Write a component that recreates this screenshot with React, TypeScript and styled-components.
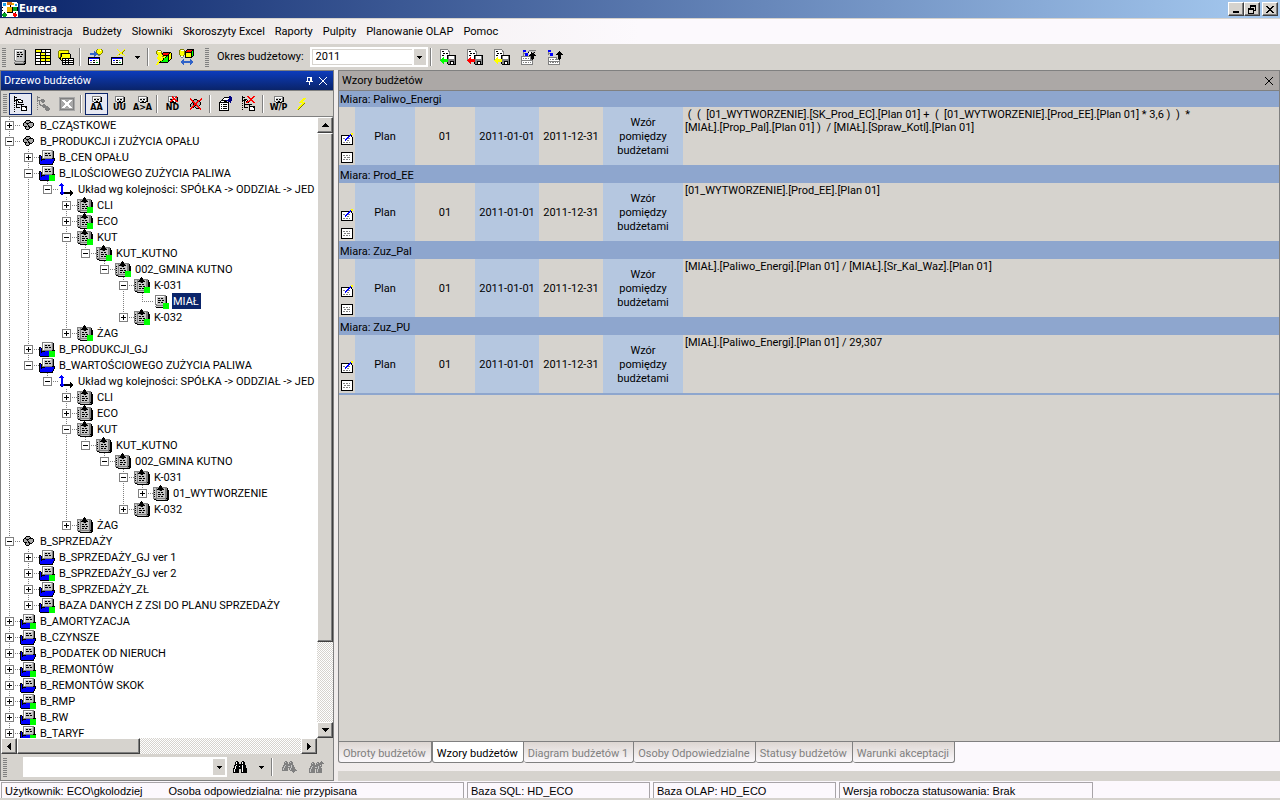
import React from "react";
import styled, { createGlobalStyle, css } from "styled-components";

const ui = `Roboto, "Liberation Sans", sans-serif`;
const face = "#d6d3ce";

const Global = createGlobalStyle`
  * { box-sizing: border-box; }
  html, body { margin: 0; height: 100%; }
  body { font: 11px/14px ${ui}; color: #000; background: ${face}; overflow: hidden; }
  button, input, select { font: inherit; color: inherit; margin: 0; padding: 0; border: 0; background: none; border-radius: 0; }
  button:focus-visible { outline: 1px dotted #000; }
`;

/* ---------- pixel icons ---------- */

const palette: Record<string, string> = {
  k: "#000000", w: "#ffffff", g: "#808080", l: "#c6c6c6", y: "#ffff00", o: "#808000",
  b: "#0000ff", n: "#000080", G: "#00ff00", e: "#00a020", r: "#ff0000", s: "#2f62c8",
  a: "#f0b000", c: "#20a0e8", t: "#e07010", d: "#a8a8a8",
};

function Pixels({ rows }: { rows: string[] }) {
  const width = Math.max(...rows.map((r) => r.length));
  const rects: React.ReactNode[] = [];
  rows.forEach((row, y) => {
    let x = 0;
    while (x < row.length) {
      let end = x + 1;
      while (end < row.length && row[end] === row[x]) end++;
      if (palette[row[x]]) {
        rects.push(<rect key={`${x}-${y}`} x={x} y={y} width={end - x} height={1} fill={palette[row[x]]} />);
      }
      x = end;
    }
  });
  return (
    <svg width={width} height={rows.length} viewBox={`0 0 ${width} ${rows.length}`} shapeRendering="crispEdges" aria-hidden="true">
      {rects}
    </svg>
  );
}

const icons: Record<string, string[]> = {
  logo: [
    "wwwwwtttttwwwww.",
    "wcccwtttttaawwww",
    "wcccwtttttaawccw",
    "wcccwwwwkwwwwccw",
    "wwwwwwwwkwwwwwww",
    "kwwwwaaaaakeeeek",
    "wwwwwaaaaakeeeek",
    "wwwwwaaaaakeeeek",
    "kwwwwaaaaakeeeek",
    "wwwwwaaaaakwwwww",
    "wwkwwkkkkkkwwkww",
    "weeewwwwwwwrrrww",
    "eeeeewwwwwwrrrrw",
    "eeeeewwwwwwrrrrw",
    "weeewwwwwwwwrrww",
  ],
  doc: [
    "ggggggggggg.",
    "gwwwwwwwwlgk",
    "gwllllllllgk",
    "gwlkklkkllgk",
    "gwllllllllgk",
    "gwlkkklkklgk",
    "gwllllllllgk",
    "gwlkklkkllgk",
    "gwllllllllgk",
    "gwllllllllgk",
    "gwllllllllgk",
    "ggllllllllgk",
    ".gggggggggkk",
    "gllllllllggk",
    "ggggggggggkk",
    ".kkkkkkkkkk.",
  ],
  grid: [
    "kkkkkkkkkkkkkkkk",
    "kyyyyykwwwkwwwwk",
    "kyyyyykwwwkwwwwk",
    "kkkkkkkkkkkkkkkk",
    "kwwwwkyyyykwwwwk",
    "kwwwwkyyyykwwwwk",
    "kkkkkkkkkkkkkkkk",
    "kwwwwkyyyykyyyyk",
    "kwwwwkyyyykyyyyk",
    "kkkkkkkkkkkkkkkk",
    "kwwwwkyyyykyyyyk",
    "kwwwwkyyyykyyyyk",
    "kkkkkkkkkkkkkkkk",
    "kwwwwkwwwwkwwwwk",
    "kwwwwkwwwwkwwwwk",
    "kkkkkkkkkkkkkkkk",
  ],
  stack: [
    ".oooooooooo.....",
    "oyyyyyyyyyo.....",
    "oyyyyyyyyyo.....",
    "oyokkkkkkkkk....",
    "oyokyyyyyyyyk...",
    "oyokyyyyyyyyk...",
    "oyokyyyyyyyyk...",
    "ookyyyyyyyyyk...",
    ".kkykkkkkkkkkkkk",
    "..kykwwkwwkwwwwk",
    "...kkkkkkkkkkkkk",
    "....kwwkwwkwwwwk",
    "....kkkkkkkkkkkk",
    "....kwwkwwkwwwwk",
    "....kkkkkkkkkkkk",
  ],
  importForm: [
    ".........oyyyo..",
    "........oyyywyo.",
    "......s.oyyyyyo.",
    "......ssoyyyyyo.",
    "..sssssssoyyyo..",
    "..ssssssssooo...",
    "......ss..gg....",
    "......s.........",
    "kkkkkkkkkkkk....",
    "kbbbbbbbbbbk....",
    "kwwwwwwwwwwk....",
    "kwbbwkkwgwwk....",
    "kwwwwwwwwwwk....",
    "kwggwkkweewk....",
    "kwwwwwwwwwwk....",
    "kkkkkkkkkkkk....",
  ],
  deleteForm: [
    "......y......y..",
    ".......y....yo..",
    "........y..yo...",
    ".........yyo....",
    "........yyyo....",
    ".......yo..yy...",
    "......y......y..",
    "................",
    "kkkkkkkkkkkk....",
    "kbbbbbbbbbbk....",
    "kwwwwwwwwwwk....",
    "kwbbwkkwgwwk....",
    "kwwwwwwwwwwk....",
    "kwggwkkweewk....",
    "kwwwwwwwwwwk....",
    "kkkkkkkkkkkk....",
  ],
  cubeFlash: [
    ".oooo...........",
    "oywwwo..........",
    "oyyyyo.kkkkkkkk.",
    "oyyyyokrrrrrrkyk",
    ".oyyyykrrrrrkyyk",
    "..yyyyykkkkkkyyk",
    "..yyyyooyykGkyyk",
    ".yyyy.yyykGGkyyk",
    ".yyyyyykGGGGkyyk",
    "..yyyyykGGGGkyk.",
    "...yyykGGGGGkk..",
    "..yykGGGGGGGk...",
    ".yykkkkkkkkk....",
    ".yy.............",
    "yy..............",
  ],
  cubeSwap: [
    ".oooo...kkkkkkk.",
    "oywwwo.krrrrrkk.",
    "oyyyyokrrrrrkGk.",
    "oyyyyokkkkkkkGk.",
    "oyyyyokyyyyykGk.",
    "oyyyyokyyyyykGk.",
    ".oyyo.kyyyyykGk.",
    ".gwwg.kyyyyykk..",
    "..gg..kkkkkkk...",
    "................",
    "....s......s....",
    "...ss......ss...",
    "..ssssssssssss..",
    "..ssssssssssss..",
    "...ss......ss...",
    "....s......s....",
  ],
  upload: [
    "..bbb...ggggggg.",
    "..bbb..gllllll..",
    "..g....kwwk.gk..",
    "..ggbbb.wwkkk...",
    "..g.bbb..kkkkk..",
    "..g.bbb.kkkkkkk.",
    "ggggggggggkkk...",
    "gwwwwwwwwgkkk...",
    "gwgwggwgwgkkk...",
    "gwwwwwwwwggk....",
    "gggggggggggg....",
    "gwwwwwwwwwwg....",
    "gwgwggwgwgwg....",
    "gwwwwwwwwwwg....",
    "gggggggggggg....",
  ],
  uploadPlain: [
    "bbb.............",
    "bbb........k....",
    "g.........kkk...",
    "ggbbb....kkkkk..",
    "g.bbb...kkkkkkk.",
    "..bbb.....kkk...",
    "..........kkk...",
    "ggggggggg.kkk...",
    "gwwwwwwwg.kkk...",
    "gwgwggwggggk....",
    "gwwwwwwwwwwg....",
    "gggggggggggg....",
    "gwgwggwgwgwg....",
    "gwwwwwwwwwwg....",
    "gggggggggggg....",
  ],
  treeView: [
    "k.............",
    "kkk...........",
    "k.............",
    "k.kkkkk.......",
    "kkkkwwwkk.....",
    "k.k.kwwwk.....",
    "..k.kkkkk.....",
    "k.k...........",
    "..kkkkkkkk....",
    "k.k....k......",
    "..k....kkkkkk.",
    "k.kkkk.kwwwkk.",
    ".......kwwwwk.",
    "k......kwwwwk.",
    ".......kkkkkk.",
    "k.............",
  ],
  treeNodes: [
    "g.............",
    "ggg...........",
    "g.............",
    "g...ggg.......",
    "gggggggg......",
    "g.g.gggg......",
    "..g..gg.......",
    "g.g...........",
    "..gg..gg......",
    "g..gggggg.....",
    ".....gggggg...",
    "g.....gggggg..",
    "........ggggg.",
    "g.......ggggg.",
    ".........ggg..",
  ],
  excel: [
    "dddddddddddddddd",
    "dggggggggggggggd",
    "dgddddddddddddgd",
    "dgdwwwddddwwwdgd",
    "dgddwwwddwwwddgd",
    "dgdddwwwwwwdddgd",
    "dgddddwwwwddddgd",
    "dgddddwwwwddddgd",
    "dgdddwwwwwwdddgd",
    "dgddwwwddwwwddgd",
    "dgdwwwddddwwwdgd",
    "dgddddddddddddgd",
    "dggggggggggggggd",
    "dddddddddddddddd",
  ],
  miniDoc: [
    ".ggggggggg..",
    ".gwwwwwwwgk.",
    ".gwllllllgk.",
    ".gwkkwkkwgk.",
    ".gwlllllwgk.",
    ".ggwlkkwgkk.",
    "...kkkkkk...",
  ],
  miniDocX: [
    ".ggggrgggr..",
    ".gwwwrrwrrk.",
    ".gwlllrrlgk.",
    ".gwkkrrrrgk.",
    ".gwlrrwwrrk.",
    ".ggrrkkwgrr.",
    "...kkkkkk...",
  ],
  ballsX: [
    "r..........r",
    "rr..kkk...rr",
    ".rrkdddkrrr.",
    "..rrdddrrk..",
    "..krrdrrddk.",
    ".kdkrrrdddk.",
    "kddkrrrdddk.",
    "kddrrkrrdk..",
    "kdrrkddrr...",
    ".rrk.kddrr..",
    "rr....kkkrr.",
    "r.........r.",
  ],
  props: [
    "..........nn.",
    ".....kkkkknnn",
    "....kwwwwwnnn",
    "...kwwwwwnnnn",
    "..kkkkknnnnnn",
    ".kwwwkkk.nnn.",
    "kkkkkkkkkk.n.",
    "kwwwwwwwwk...",
    "kwkwkkkkwk...",
    "kwwwwwwwwk...",
    "kwkwkkkkwk...",
    "kwwwwwwwwk...",
    "kwkwkkkkwk...",
    "kwwwwwwwwk...",
    "kkkkkkkkkk...",
  ],
  treeX: [
    "k....rr....rr.",
    "kkk...rr..rr..",
    "k......rrrr...",
    "k.kkk...rr....",
    "kkkkwk.rrrr...",
    "k.k.krrr..rr..",
    "..k.rrk....rr.",
    "k.k...........",
    "..kkkkkkkk....",
    "k.k....k......",
    "..k....kkkkkk.",
    "k.kkkk.kwwwkk.",
    ".......kwwwwk.",
    "k......kwwwwk.",
    ".......kkkkkk.",
  ],
  flash: [
    "......yyy",
    ".....yyy.",
    "....yyy..",
    "...yyy...",
    "..yyyyyy.",
    ".....yyo.",
    "....yyo..",
    "...yyo...",
    "..yyo....",
    ".yyo.....",
    ".yo......",
    "yo.......",
  ],
  find: [
    "...kk....kk....",
    "..kwkk..kwkk...",
    "..kwkk..kwkk...",
    "..kkkkkkkkkk...",
    ".kkwkkkkkwkkk..",
    ".kwkkkwkkwkkk..",
    ".kwkkkkkkwkkk..",
    "kkwkkkkkkwkkkk.",
    "kwkkkk..kwkkkk.",
    "kwkkkk..kwkkkk.",
    "kwkkkk..kwkkkk.",
    "kkkkkk..kkkkkk.",
  ],
  findNext: [
    "...gg...gg.....",
    "..glgg.glgg....",
    "..gggg.gggg....",
    "..ggggggggg....",
    ".gglggggglgg...",
    ".glgggllglgg...",
    "gglgggggglggg..",
    "glgggg.glgggg..",
    "glgggg.glggggg.",
    "gggggg..ggggggg",
    "..........ggg..",
    "...........g...",
  ],
  findPrev: [
    "............g..",
    "...gg...gg.ggg.",
    "..glgg.glgggggg",
    "..gggg.gggggg..",
    "..ggggggggg.g..",
    ".gglggggglggg..",
    ".glgggllglgg...",
    "gglgggggglggg..",
    "glgggg.glgggg..",
    "glgggg.glgggg..",
    "glgggg.glgggg..",
    "gggggg.gggggg..",
  ],
  balls: [
    "....kkkk.....",
    "...kddddk....",
    "..kkdddkkkk..",
    ".kddkkkddddk.",
    ".kdddkdddddk.",
    ".kddddkddddk.",
    "..kkkdkkddk..",
    "...kdddkkk...",
    "...kdddk.....",
    "....kkk......",
  ],
  folder: [
    "...ggggggggggg..",
    "...gwwwwwwwwlgk.",
    "...gwllllllllgk.",
    "...gwlkklkkllgk.",
    "...gwllllllllgk.",
    "kk.gwlkkklkklgk.",
    "kbkgwllllllllgk.",
    "kbkgwllllllllgk.",
    "kbkggggggggggkkk",
    "kbkkkkbbbbbbbbbk",
    "kbkbbbbbbbbbbbbk",
    "kbbbbbbbbbbbbbk.",
    "kbbbbbbbbbbbbbk.",
    "kbbbbbbbbbbbbk..",
    ".kkkkkkkkkkkkk..",
  ],
  axes: [
    "...b............",
    "..bbb...........",
    ".bbbbb..........",
    "...bb...........",
    "...bb...........",
    "...bb...........",
    "...bb...........",
    "...bb.......k...",
    "...bb.......kk..",
    "..nbbbkkkkkkkkk.",
    "..nbbbkkkkkkkkk.",
    "...nn.......kk..",
    "............k...",
  ],
  docs: [
    ".......k........",
    "......kkk.......",
    "ggggggkkkggggg..",
    "gllgdkkkkkdlggk.",
    "gllgkkkkkkklggk.",
    "gklgllgkklllggkk",
    "gllgllllllllggkk",
    "gklglkklkkllggkk",
    "gllgllllllllggkk",
    "gklglkkklkklggkk",
    "gllgllllllllggkk",
    "gklglkklkkllggkk",
    "gllgllllllllggkk",
    "gggggggggggggkkk",
    ".kkgllllllllggkk",
    "...kkkkkkkkkkkk.",
  ],
  sheet: [
    ".ggggggggggg..",
    ".gwwwwwwwwlgk.",
    ".gwllllllllgk.",
    ".gwlkklkkllgk.",
    ".gwllllllllgk.",
    ".gwlkkklkklgk.",
    ".gwllllllllgk.",
    ".gwlkklkkllgk.",
    ".gwllllllllgk.",
    ".ggllllllllgk.",
    "..gggggggggkk.",
    ".glllllllllgk.",
    "..kkkkkkkkkkk.",
  ],
  edit: [
    "..........yy",
    ".........byy",
    "kkkkkkkkbbk.",
    "kwwwwwwbbwk.",
    "kwwwwwbbwwwk",
    "kwggwbbggwwk",
    "kwwwbbwwwwwk",
    "kwwwbwggwwwk",
    "kwwwwwwwwwwk",
    "kwggwggwgwwk",
    "kwwwwwwwwwwk",
    "kkkkkkkkkkkk",
  ],
  list: [
    "kkkkkkkkkkkk",
    "kwwwwwwwwwwk",
    "kwwwwwwwwwwk",
    "kwggwggwgwwk",
    "kwwwwwwwwwwk",
    "kwwggwgggwwk",
    "kwwwwwwwwwwk",
    "kwggwggwgwwk",
    "kwwwwwwwwwwk",
    "kwwwwwwwwwwk",
    "kkkkkkkkkkkk",
  ],
  pin: [".wwwww.", ".w..ww.", ".w..ww.", ".w..ww.", "wwwwwww", "...w...", "...w...", "...w..."],
  closeLight: ["w......w", ".w....w.", "..w..w..", "...ww...", "...ww...", "..w..w..", ".w....w.", "w......w"],
  closeThin: ["k......k", ".k....k.", "..k..k..", "...kk...", "...kk...", "..k..k..", ".k....k.", "k......k"],
  minimize: [".......", ".......", ".......", ".......", ".......", ".......", "kkkkkk.", "kkkkkk."],
  restore: ["..kkkkkk", "..kkkkkk", "..k....k", "kkkkkk.k", "kkkkkk.k", "k....kkk", "k....k..", "k....k..", "kkkkkk.."],
  close: ["kk....kk", ".kk..kk.", "..kkkk..", "...kk...", "..kkkk..", ".kk..kk.", "kk....kk"],
  down: ["kkkkk", ".kkk.", "..k.."],
  arrowUp: ["...k...", "..kkk..", ".kkkkk.", "kkkkkkk"],
  arrowDown: ["kkkkkkk", ".kkkkk.", "..kkk..", "...k..."],
  arrowLeft: ["...k", "..kk", ".kkk", "kkkk", ".kkk", "..kk", "...k"],
  arrowRight: ["k...", "kk..", "kkk.", "kkkk", "kkk.", "kk..", "k..."],
};

const saveBase = [
  "gggggggg........",
  "gwwwwwwwg.......",
  "gwkkwwwwgg......",
  "gwwwwwwwwg......",
  "gwwkkwkkwg......",
  "gwwwwwwwwg......",
  "gwkkwwwkkkkkkkkk",
  "gwwwwwwkgwwwwwgk",
  "gwwXwwwkgwwwwwgk",
  "gwXXwwwkgwwwwwgk",
  "gXXXXXXXgggggggk",
  "XXXXXXXXgggggggk",
  ".XXXXXXXggkkkkgk",
  "..XX...kggkwwkgk",
  "...X...kggkwwkgk",
  "........kkkkkkkk",
];
const save = (colour: string) => saveBase.map((row) => row.replace(/X/g, colour));
icons.saveGreen = save("G");
icons.saveRed = save("r");
icons.saveYellow = save("y");

const Icon = ({ name }: { name: string }) => <Pixels rows={icons[name]} />;

/* ---------- shell ---------- */

const Shell = styled.div`
  display: flex;
  flex-direction: column;
  height: 100vh;
  svg { display: block; flex: none; }
`;

const TitleBar = styled.header`
  display: flex;
  align-items: center;
  flex: none;
  height: 19px;
  padding: 0 2px;
  border-bottom: 1px solid ${face};
  background: linear-gradient(90deg, #0a246a, #a6caf0);
`;

const AppName = styled.h1`
  flex: 1;
  margin: 0 1px;
  font: bold 11px/16px "DejaVu Sans Condensed", sans-serif;
  color: #fff;
`;

const raised = css`
  background: ${face};
  border: 1px solid;
  border-color: #fff #404040 #404040 #fff;
  box-shadow: inset -1px -1px #808080;
`;

const WindowButton = styled.button<{ $apart?: boolean }>`
  ${raised}
  display: flex;
  align-items: center;
  justify-content: center;
  width: 16px;
  height: 14px;
  margin-left: ${(p) => (p.$apart ? 2 : 0)}px;
`;

const MenuBar = styled.nav`
  display: flex;
  align-items: center;
  flex: none;
  height: 25px;
  background: linear-gradient(90deg, #e9e4e0, #fcf9fd 50%);
`;

const MenuItem = styled.button`
  padding: 4px 5px;
`;

const ToolBar = styled.div<{ $height: number }>`
  display: flex;
  align-items: center;
  flex: none;
  height: ${(p) => p.$height}px;
  background: ${face};
`;

const Grip = styled.span<{ $apart?: boolean }>`
  flex: none;
  width: 4px;
  height: 19px;
  margin: 0 2px 0 ${(p) => (p.$apart ? 7 : 2)}px;
  background: repeating-linear-gradient(#808080 0 1px, transparent 1px 2px);
`;

const Divider = styled.span`
  flex: none;
  width: 2px;
  height: 18px;
  margin: 0 3px 0 2px;
  border-left: 1px solid #808080;
  border-right: 1px solid #fff;
`;

const ToolButton = styled.button<{ $on?: boolean; $width?: number }>`
  display: flex;
  flex-direction: column;
  align-items: center;
  justify-content: center;
  gap: 1px;
  flex: none;
  width: ${(p) => p.$width ?? 23}px;
  height: 22px;
  ${(p) => p.$on && css`border: 1px solid #0a246a; background: #e6e8f2;`}
`;

const Caption = styled.span`
  font: bold 8px/8px "DejaVu Sans", sans-serif;
  white-space: nowrap;
`;

const FieldLabel = styled.label`
  margin: 0 6px 1px;
`;

const Combo = styled.div<{ $framed?: boolean; $width: number }>`
  display: flex;
  align-items: center;
  flex: none;
  width: ${(p) => p.$width}px;
  height: 20px;
  margin-left: ${(p) => (p.$framed ? 0 : 14)}px;
  padding: 2px;
  background: #fff;
  > input, > select {
    flex: 1;
    min-width: 0;
    height: 16px;
    padding: 0 3px;
    appearance: none;
    outline: 0;
    ${(p) => p.$framed && css`border: 1px solid ${face}; border-right: 0;`}
  }
`;

const ComboArrow = styled.span`
  display: flex;
  align-items: center;
  justify-content: center;
  width: 12px;
  height: 16px;
  margin-left: 2px;
  background: ${face};
  pointer-events: none;
`;

const Workspace = styled.main`
  display: flex;
  flex: 1;
  min-height: 0;
  gap: 4px;
  background: linear-gradient(90deg, #e9e4e0, #fcf9fd 70%);
`;

const SidePanel = styled.section`
  display: flex;
  flex-direction: column;
  flex: none;
  width: 334px;
  border: 1px solid #808080;
  background: ${face};
`;

const PanelHeader = styled.div<{ $active?: boolean }>`
  display: flex;
  align-items: center;
  flex: none;
  height: 20px;
  padding: 0 3px;
  border-bottom: 1px solid #808080;
  color: ${(p) => (p.$active ? "#fff" : "#000")};
  background: ${(p) => (p.$active ? "linear-gradient(#0d3cbc, #0a246a)" : "#aca8a6")};
`;

const PanelTitle = styled.h2`
  flex: 1;
  margin: 0;
  font: inherit;
`;

const HeaderButton = styled.button`
  display: flex;
  align-items: center;
  justify-content: center;
  width: 14px;
  height: 14px;
`;

/* ---------- tree ---------- */

const TreeFrame = styled.div`
  display: grid;
  grid-template: minmax(0, 1fr) 16px / minmax(0, 1fr) 16px;
  flex: 1;
  min-height: 0;
  border-top: 1px solid #808080;
`;

const Tree = styled.ul`
  margin: 0;
  padding: 0;
  overflow: hidden;
  list-style: none;
  background: #fff;
`;

const Row = styled.li`
  display: flex;
  height: 16px;
  white-space: nowrap;
`;

const dotsDown = "repeating-linear-gradient(#808080 0 1px, transparent 1px 2px)";
const dotsAcross = "repeating-linear-gradient(90deg, #808080 0 1px, transparent 1px 2px)";

const Guide = styled.span<{ $line: "none" | "through" | "branch" | "last" }>`
  display: flex;
  align-items: center;
  flex: none;
  width: 19px;
  padding-left: 4px;
  background-repeat: no-repeat;
  ${(p) => p.$line === "through" && css`background-image: ${dotsDown}; background-size: 1px 16px; background-position: 8px 0;`}
  ${(p) => p.$line === "branch" && css`background-image: ${dotsDown}, ${dotsAcross}; background-size: 1px 16px, 11px 1px; background-position: 8px 0, 8px 8px;`}
  ${(p) => p.$line === "last" && css`background-image: ${dotsDown}, ${dotsAcross}; background-size: 1px 8px, 11px 1px; background-position: 8px 0, 8px 8px;`}
`;

const Expander = styled.button<{ $open: boolean }>`
  width: 9px;
  height: 9px;
  margin-top: 1px;
  border: 1px solid #808080;
  background:
    linear-gradient(#000, #000) center / 5px 1px no-repeat,
    linear-gradient(#000, #000) center / 1px ${(p) => (p.$open ? 1 : 5)}px no-repeat,
    #fff;
`;

const NodeIcon = styled.span<{ $marked?: boolean }>`
  display: flex;
  align-items: center;
  justify-content: center;
  flex: none;
  width: 16px;
  height: 16px;
  position: relative;
  ${(p) => p.$marked && css`
    &::after { content: ""; position: absolute; right: 0; bottom: 0; width: 6px; height: 6px; background: #00ff00; }
  `}
`;

const NodeLabel = styled.span<{ $selected?: boolean }>`
  margin-left: 3px;
  padding: 2px 2px 0 1px;
  ${(p) => p.$selected && css`color: #fff; background: #0a246a;`}
`;

type Node = { level: number; text: string; icon: string; open?: boolean; marked?: boolean; leaf?: boolean; selected?: boolean };

const n = (level: number, text: string, icon: string, flags = ""): Node => ({
  level, text, icon,
  open: flags.includes("o"), marked: flags.includes("m"), leaf: flags.includes("l"), selected: flags.includes("s"),
});

const layout = "Układ wg kolejności: SPÓŁKA -> ODDZIAŁ -> JED";

const nodes: Node[] = [
  n(0, "B_CZĄSTKOWE", "balls"),
  n(0, "B_PRODUKCJI i ZUŻYCIA OPAŁU", "balls", "o"),
  n(1, "B_CEN OPAŁU", "folder"),
  n(1, "B_ILOŚCIOWEGO ZUŻYCIA PALIWA", "folder", "om"),
  n(2, layout, "axes", "o"),
  n(3, "CLI", "docs", "m"),
  n(3, "ECO", "docs", "m"),
  n(3, "KUT", "docs", "om"),
  n(4, "KUT_KUTNO", "docs", "om"),
  n(5, "002_GMINA KUTNO", "docs", "om"),
  n(6, "K-031", "docs", "om"),
  n(7, "MIAŁ", "sheet", "mls"),
  n(6, "K-032", "docs", "m"),
  n(3, "ŻAG", "docs", "m"),
  n(1, "B_PRODUKCJI_GJ", "folder", "m"),
  n(1, "B_WARTOŚCIOWEGO ZUŻYCIA PALIWA", "folder", "o"),
  n(2, layout, "axes", "o"),
  n(3, "CLI", "docs"),
  n(3, "ECO", "docs"),
  n(3, "KUT", "docs", "o"),
  n(4, "KUT_KUTNO", "docs", "o"),
  n(5, "002_GMINA KUTNO", "docs", "o"),
  n(6, "K-031", "docs", "o"),
  n(7, "01_WYTWORZENIE", "docs"),
  n(6, "K-032", "docs"),
  n(3, "ŻAG", "docs"),
  n(0, "B_SPRZEDAŻY", "balls", "o"),
  n(1, "B_SPRZEDAŻY_GJ ver 1", "folder"),
  n(1, "B_SPRZEDAŻY_GJ ver 2", "folder", "m"),
  n(1, "B_SPRZEDAŻY_ZŁ", "folder"),
  n(1, "BAZA DANYCH Z ZSI DO PLANU SPRZEDAŻY", "folder", "m"),
  n(0, "B_AMORTYZACJA", "folder", "m"),
  n(0, "B_CZYNSZE", "folder"),
  n(0, "B_PODATEK OD NIERUCH", "folder"),
  n(0, "B_REMONTÓW", "folder", "m"),
  n(0, "B_REMONTÓW SKOK", "folder"),
  n(0, "B_RMP", "folder", "m"),
  n(0, "B_RW", "folder", "m"),
  n(0, "B_TARYF", "folder", "m"),
];

/* true when a later sibling exists at the given level */
function continues(index: number, level: number) {
  if (level === 0) return true;
  for (let i = index + 1; i < nodes.length; i++) {
    if (nodes[i].level < level) return false;
    if (nodes[i].level === level) return true;
  }
  return false;
}

function TreeRow({ node, index }: { node: Node; index: number }) {
  return (
    <Row role="treeitem" aria-level={node.level + 1} aria-selected={!!node.selected}>
      {Array.from({ length: node.level }, (_, level) => (
        <Guide key={level} $line={continues(index, level) ? "through" : "none"} />
      ))}
      <Guide $line={continues(index, node.level) ? "branch" : "last"}>
        {!node.leaf && <Expander $open={!!node.open} aria-label={node.open ? "Zwiń" : "Rozwiń"} />}
      </Guide>
      <NodeIcon $marked={node.marked}><Icon name={node.icon} /></NodeIcon>
      <NodeLabel $selected={node.selected}>{node.text}</NodeLabel>
    </Row>
  );
}

const Scroll = styled.div<{ $vertical?: boolean }>`
  display: flex;
  flex-direction: ${(p) => (p.$vertical ? "column" : "row")};
  background: repeating-conic-gradient(#fff 0 25%, ${face} 0 50%) 0 0 / 2px 2px;
`;

const ScrollButton = styled.button`
  ${raised}
  display: flex;
  align-items: center;
  justify-content: center;
  flex: none;
  width: 16px;
  height: 16px;
`;

const Thumb = styled.span<{ $size: string }>`
  ${raised}
  flex: 0 0 ${(p) => p.$size};
`;

const Spring = styled.span`
  flex: 1;
`;

/* ---------- formulas ---------- */

const MainPanel = styled.section`
  display: flex;
  flex-direction: column;
  flex: 1;
  min-width: 0;
`;

const PanelBody = styled.div`
  display: flex;
  flex-direction: column;
  flex: 1;
  min-height: 0;
  border: 1px solid #808080;
  background: ${face};
`;

const Formulas = styled.table`
  width: 100%;
  table-layout: fixed;
  border-spacing: 0;
  border-bottom: 2px solid #8ea6ce;
`;

const Column = styled.col<{ $width?: number }>`
  ${(p) => p.$width && css`width: ${p.$width}px;`}
`;

const Measure = styled.th<{ $first: boolean }>`
  height: ${(p) => (p.$first ? 16 : 18)}px;
  padding: 0 1px;
  font-weight: normal;
  text-align: left;
  vertical-align: bottom;
  background: #8ea6ce;
`;

const Cell = styled.td<{ $tint?: boolean }>`
  height: 58px;
  padding: 2px 0 0;
  text-align: center;
  background: ${(p) => (p.$tint ? "#b5c7e0" : face)};
`;

const ActionCell = styled(Cell)`
  padding: 0 0 2px 2px;
  vertical-align: bottom;
`;

const RowButton = styled.button`
  display: block;
  width: 12px;
  margin-top: 7px;
`;

const FormulaCell = styled(Cell)`
  padding: 1px 2px 0;
  line-height: 13px;
  text-align: left;
  vertical-align: top;
  white-space: pre-wrap;
`;

const formulas = [
  { name: "Paliwo_Energi", lines: [" (  (  [01_WYTWORZENIE].[SK_Prod_EC].[Plan 01] +  (  [01_WYTWORZENIE].[Prod_EE].[Plan 01] * 3,6 )  )  *", "[MIAŁ].[Prop_Pal].[Plan 01] )  / [MIAŁ].[Spraw_Kotl].[Plan 01]"] },
  { name: "Prod_EE", lines: ["[01_WYTWORZENIE].[Prod_EE].[Plan 01]"] },
  { name: "Zuz_Pal", lines: ["[MIAŁ].[Paliwo_Energi].[Plan 01] / [MIAŁ].[Sr_Kal_Waz].[Plan 01]"] },
  { name: "Zuz_PU", lines: ["[MIAŁ].[Paliwo_Energi].[Plan 01] / 29,307"] },
];

const Tabs = styled.div`
  display: flex;
  flex: none;
  height: 29px;
`;

const Tab = styled.button<{ $active?: boolean }>`
  height: 21px;
  padding: 4px 5px 0 4px;
  border: 1px solid #808080;
  border-top: 0;
  border-left-width: ${(p) => (p.$active ? 1 : 0)}px;
  border-radius: 0 0 3px 3px;
  color: ${(p) => (p.$active ? "#000" : "#808080")};
  background: ${(p) => (p.$active ? "#fff" : "linear-gradient(#ddd6d2, #fbf8fb)")};
  &:first-child { border-left-width: 1px; }
`;

const Footing = styled.div`
  flex: none;
  height: 10px;
  background: ${face};
`;

const StatusBar = styled.footer`
  display: flex;
  flex: none;
  gap: 3px;
  height: 19px;
  padding: 1px 1px 0;
  border-bottom: 2px solid ${face};
  background: #fcf8fd;
  font-family: "Liberation Sans", sans-serif;
`;

const StatusCell = styled.div<{ $width: number }>`
  display: flex;
  gap: 26px;
  flex: 0 1 ${(p) => p.$width}px;
  padding: 1px 3px 0;
  border: 1px solid #a8a4a8;
  border-bottom: 0;
  white-space: nowrap;
`;

const menu = ["Administracja", "Budżety", "Słowniki", "Skoroszyty Excel", "Raporty", "Pulpity", "Planowanie OLAP", "Pomoc"];
const tabs = ["Obroty budżetów", "Wzory budżetów", "Diagram budżetów 1", "Osoby Odpowiedzialne", "Statusy budżetów", "Warunki akceptacji"];

function Tool({ icon, label, on, width, caption }: { icon: string; label: string; on?: boolean; width?: number; caption?: string }) {
  return (
    <ToolButton $on={on} $width={width} aria-label={label} aria-pressed={on}>
      <Icon name={icon} />
      {caption && <Caption>{caption}</Caption>}
    </ToolButton>
  );
}

export default function App() {
  return (
    <Shell>
      <Global />
      <TitleBar>
        <Icon name="logo" />
        <AppName>Eureca</AppName>
        <WindowButton aria-label="Minimalizuj"><Icon name="minimize" /></WindowButton>
        <WindowButton aria-label="Przywróć"><Icon name="restore" /></WindowButton>
        <WindowButton $apart aria-label="Zamknij"><Icon name="close" /></WindowButton>
      </TitleBar>
      <MenuBar>
        {menu.map((item) => <MenuItem key={item}>{item}</MenuItem>)}
      </MenuBar>
      <ToolBar $height={26}>
        <Grip />
        <Tool icon="doc" label="Budżet" />
        <Tool icon="grid" label="Tabela" />
        <Tool icon="stack" label="Zestaw tabel" />
        <Divider />
        <Tool icon="importForm" label="Import" />
        <Tool icon="deleteForm" label="Usuń" />
        <Tool icon="down" label="Więcej" width={15} />
        <Divider />
        <Tool icon="cubeFlash" label="Przelicz kostkę" />
        <Tool icon="cubeSwap" label="Synchronizuj kostkę" />
        <Grip $apart />
        <FieldLabel htmlFor="period">Okres budżetowy:</FieldLabel>
        <Combo $framed $width={118}>
          <select id="period" defaultValue="2011"><option>2011</option></select>
          <ComboArrow><Icon name="down" /></ComboArrow>
        </Combo>
        <Divider />
        <Tool icon="saveGreen" label="Zapisz" width={27} />
        <Tool icon="saveRed" label="Cofnij zapis" width={27} />
        <Tool icon="saveYellow" label="Zapisz roboczo" width={27} />
        <Tool icon="upload" label="Wyślij wszystko" width={27} />
        <Tool icon="uploadPlain" label="Wyślij" width={27} />
      </ToolBar>
      <Workspace>
        <SidePanel>
          <PanelHeader $active>
            <PanelTitle>Drzewo budżetów</PanelTitle>
            <HeaderButton aria-label="Przypnij"><Icon name="pin" /></HeaderButton>
            <HeaderButton aria-label="Zamknij panel"><Icon name="closeLight" /></HeaderButton>
          </PanelHeader>
          <ToolBar $height={25}>
            <Grip />
            <Tool icon="treeView" label="Widok drzewa" on />
            <Tool icon="treeNodes" label="Węzły" />
            <Tool icon="excel" label="Excel" />
            <Divider />
            <Tool icon="miniDoc" label="Nazwy AA" caption="AA" on />
            <Tool icon="miniDoc" label="Nazwy UU" caption="UU" />
            <Tool icon="miniDoc" label="Nazwy A do A" caption="A>A" />
            <Divider />
            <Tool icon="miniDocX" label="Bez danych" caption="ND" />
            <Tool icon="ballsX" label="Bez grup" />
            <Divider />
            <Tool icon="props" label="Właściwości" />
            <Tool icon="treeX" label="Usuń gałąź" />
            <Divider />
            <Tool icon="miniDoc" label="Widok W/P" caption="W/P" />
            <Tool icon="flash" label="Odśwież" />
          </ToolBar>
          <TreeFrame>
            <Tree role="tree">
              {nodes.map((node, i) => <TreeRow key={i} node={node} index={i} />)}
            </Tree>
            <Scroll $vertical>
              <ScrollButton aria-label="W górę"><Icon name="arrowUp" /></ScrollButton>
              <Thumb $size="82%" />
              <Spring />
              <ScrollButton aria-label="W dół"><Icon name="arrowDown" /></ScrollButton>
            </Scroll>
            <Scroll>
              <ScrollButton aria-label="W lewo"><Icon name="arrowLeft" /></ScrollButton>
              <Thumb $size="123px" />
              <Spring />
              <ScrollButton aria-label="W prawo"><Icon name="arrowRight" /></ScrollButton>
            </Scroll>
          </TreeFrame>
          <ToolBar $height={26}>
            <Grip />
            <Combo $width={204}>
              <input type="text" aria-label="Szukaj" />
              <ComboArrow><Icon name="down" /></ComboArrow>
            </Combo>
            <Tool icon="find" label="Szukaj" width={27} />
            <Tool icon="down" label="Opcje szukania" width={15} />
            <Divider />
            <Tool icon="findNext" label="Znajdź następny" width={27} />
            <Tool icon="findPrev" label="Znajdź poprzedni" width={27} />
          </ToolBar>
        </SidePanel>
        <MainPanel>
          <PanelBody>
            <PanelHeader>
              <PanelTitle>Wzory budżetów</PanelTitle>
              <HeaderButton aria-label="Zamknij panel"><Icon name="closeThin" /></HeaderButton>
            </PanelHeader>
            <Formulas>
              <colgroup>
                {[16, 60, 60, 64, 64, 80].map((w, i) => <Column key={i} $width={w} />)}
                <Column />
              </colgroup>
              {formulas.map((f, i) => (
                <tbody key={f.name}>
                  <tr><Measure $first={i === 0} colSpan={7} scope="rowgroup">Miara: {f.name}</Measure></tr>
                  <tr>
                    <ActionCell>
                      <RowButton aria-label="Edytuj wzór"><Icon name="edit" /></RowButton>
                      <RowButton aria-label="Szczegóły wzoru"><Icon name="list" /></RowButton>
                    </ActionCell>
                    <Cell $tint>Plan</Cell>
                    <Cell>01</Cell>
                    <Cell $tint>2011-01-01</Cell>
                    <Cell>2011-12-31</Cell>
                    <Cell $tint>Wzór<br />pomiędzy<br />budżetami</Cell>
                    <FormulaCell>{f.lines.map((line) => <div key={line}>{line}</div>)}</FormulaCell>
                  </tr>
                </tbody>
              ))}
            </Formulas>
          </PanelBody>
          <Tabs role="tablist">
            {tabs.map((tab, i) => <Tab key={tab} role="tab" aria-selected={i === 1} $active={i === 1}>{tab}</Tab>)}
          </Tabs>
          <Footing />
        </MainPanel>
      </Workspace>
      <StatusBar>
        <StatusCell $width={463}><span>Użytkownik: ECO\gkolodziej</span><span>Osoba odpowiedzialna: nie przypisana</span></StatusCell>
        <StatusCell $width={183}>Baza SQL: HD_ECO</StatusCell>
        <StatusCell $width={183}>Baza OLAP: HD_ECO</StatusCell>
        <StatusCell $width={254}>Wersja robocza statusowania: Brak</StatusCell>
      </StatusBar>
    </Shell>
  );
}
